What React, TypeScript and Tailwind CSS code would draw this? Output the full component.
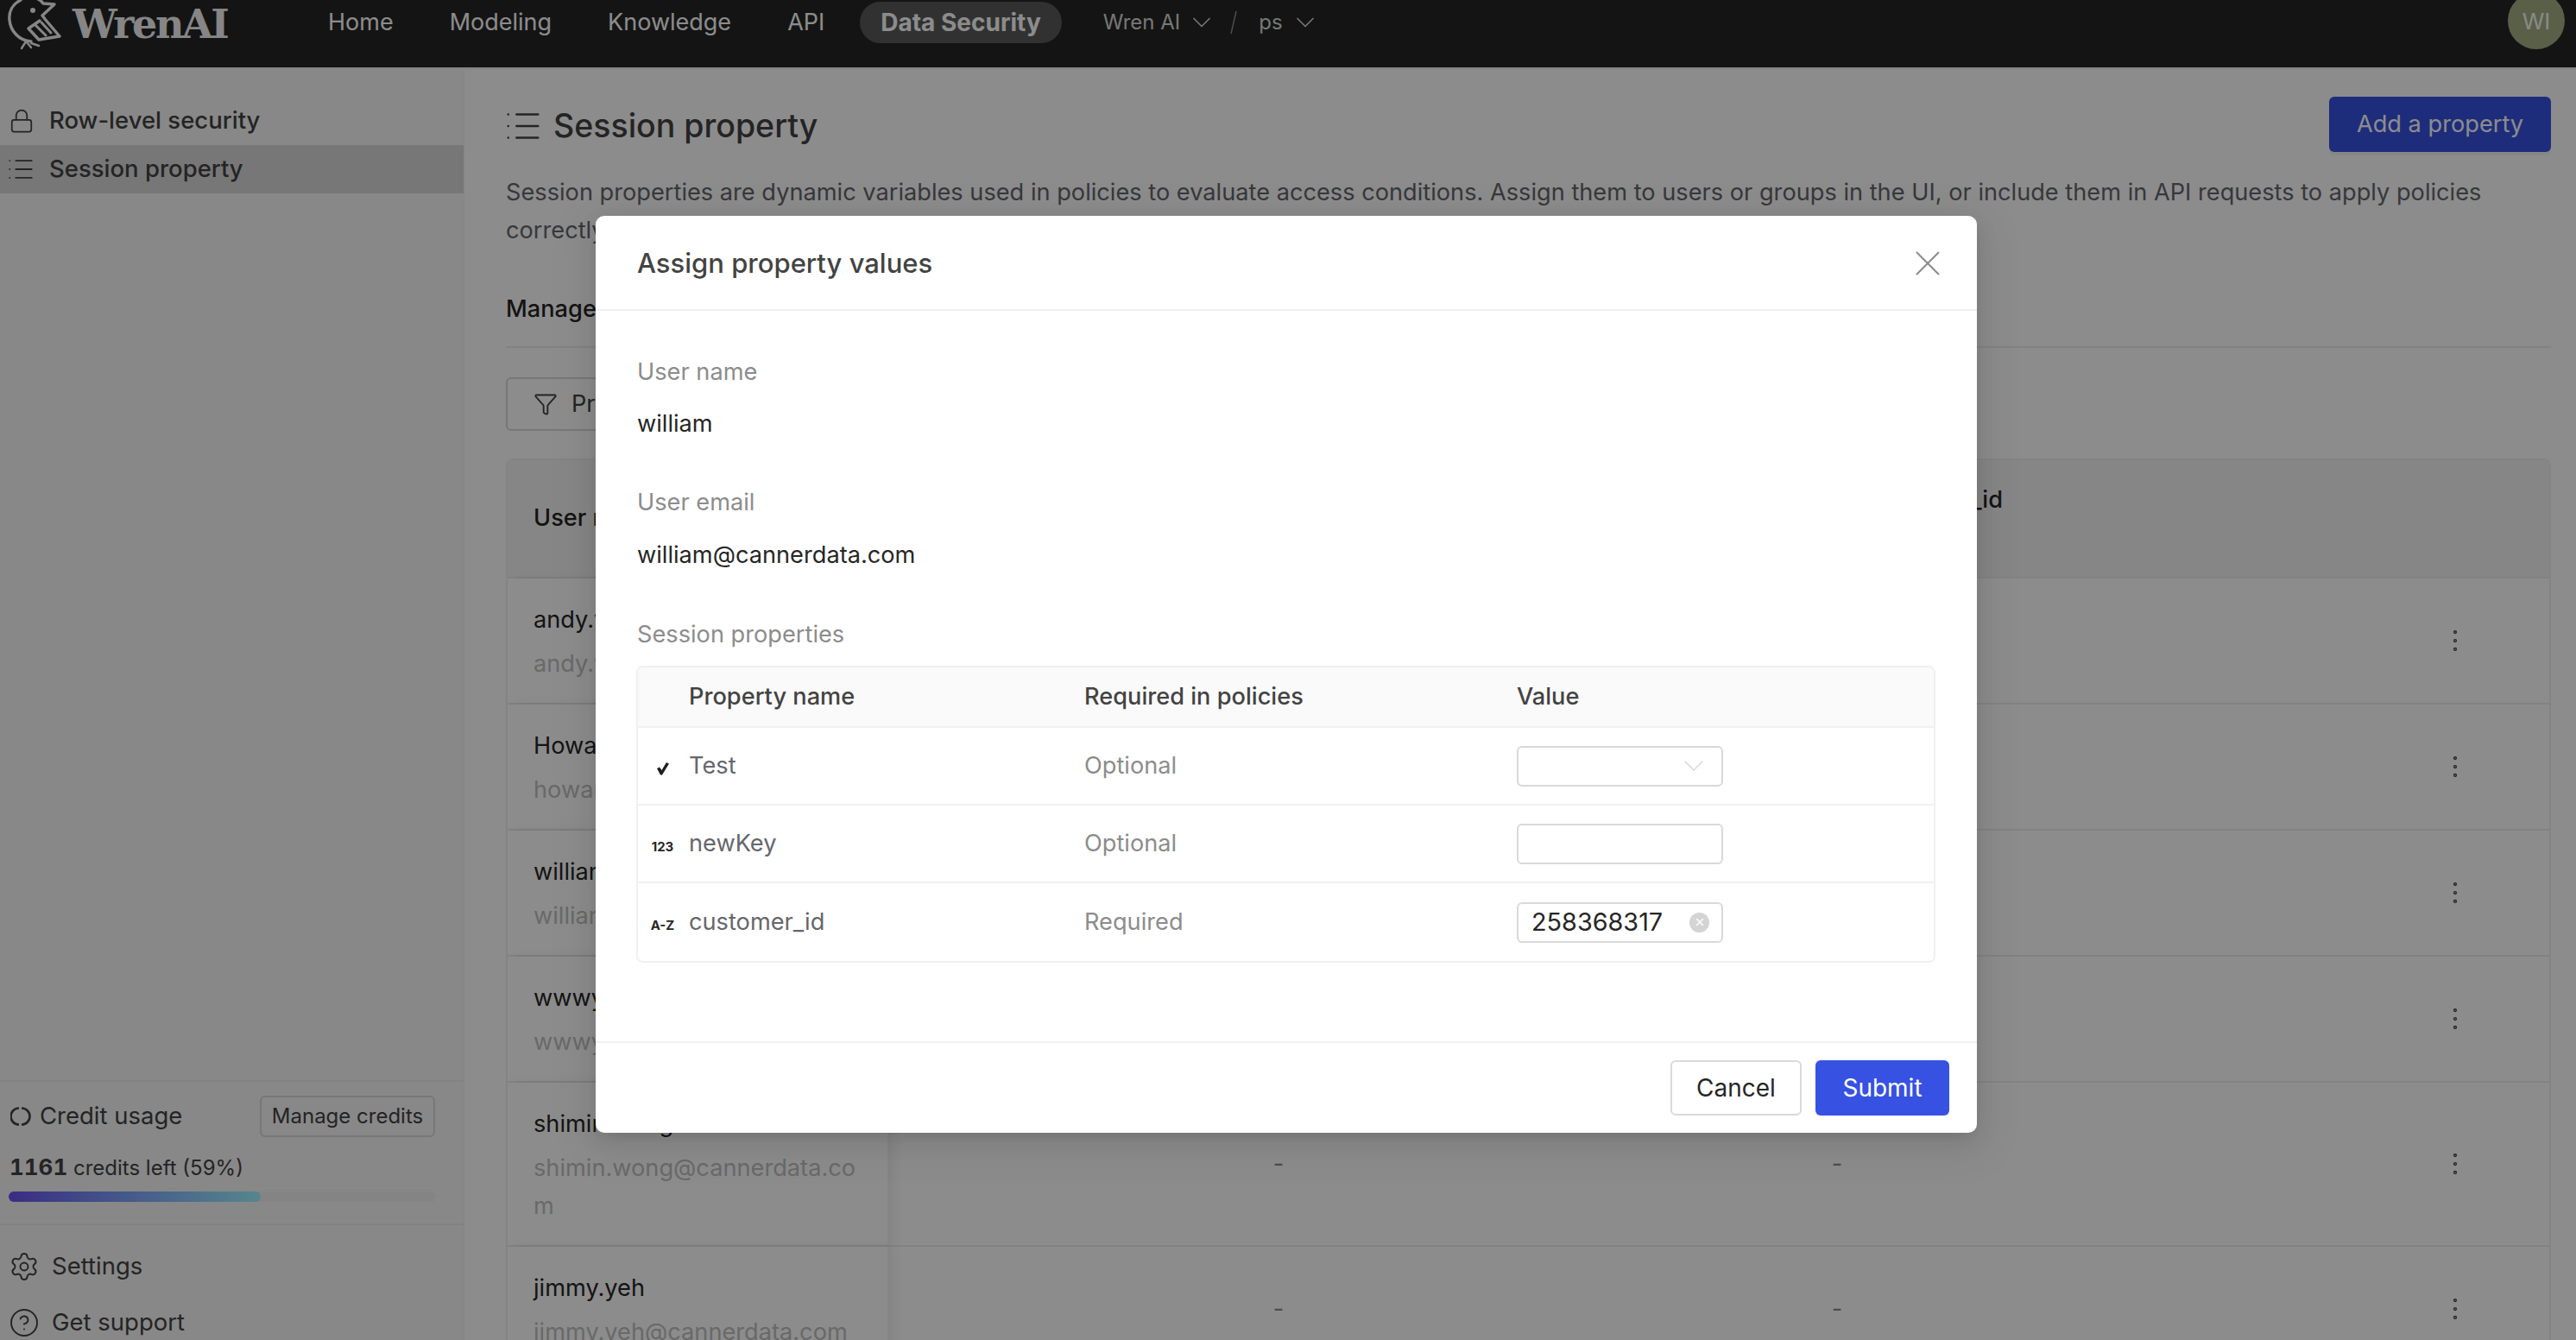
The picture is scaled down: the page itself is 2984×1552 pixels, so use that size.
import { ChevronDown, CircleHelp, Filter, List, Lock, Settings, X, EllipsisVertical } from "lucide-react";

const users = [
  { name: "andy.yang", email: "andy.yang@cannerdata.com", dash: false },
  { name: "Howard", email: "howard@cannerdata.com", dash: false },
  { name: "william", email: "william@cannerdata.com", dash: false },
  { name: "wwwy", email: "wwwy@cannerdata.com", dash: false },
  { name: "shimin.wong", email: "shimin.wong@cannerdata.com", dash: true },
  { name: "jimmy.yeh", email: "jimmy.yeh@cannerdata.com", dash: true },
];

const navItems = ["Home", "Modeling", "Knowledge", "API"];

function WrenLogo() {
  return (
    <svg viewBox="0 0 75 58" className="h-[58px] w-[75px] shrink-0 self-start" fill="none" stroke="currentColor" strokeWidth="3.4" strokeLinecap="round" strokeLinejoin="round">
      <path d="M24 0C14 5 10 14 11 23c1 13 11 24 25 25" />
      <path d="M42 -2c3 1 6 3 8 6l13 1-14 13 3 4 17 20-24 4-12-13 13-9" />
      <circle cx="38" cy="12" r="3" fill="currentColor" stroke="none" />
      <path d="M41 29l12 12M48 26l11 12" strokeWidth="3" />
      <path d="M30 48l-5 8M31 49l5 6M36 50l9 3" strokeWidth="2.4" />
    </svg>
  );
}

function Sidebar() {
  return (
    <aside className="h-[1472px] w-[538px] shrink-0 overflow-hidden border-r border-[#f0f0f0] bg-[#f7f7f7]">
      <div className="h-[1171px] pt-[32px] text-[27.5px] font-medium text-[#434343]">
        <div className="flex h-[56px] items-center gap-[17px] pl-[10px]">
          <Lock className="h-[30px] w-[30px]" strokeWidth={1.4} />
          Row-level security
        </div>
        <div className="flex h-[56px] items-center gap-[16px] bg-[#d9d9d9] pl-[7px]">
          <List className="h-[34px] w-[34px]" strokeWidth={1.3} />
          Session property
        </div>
      </div>
      <div className="border-y-2 border-[#ededed] pb-[25px] pl-[10px] pr-[33px] pt-[16px]">
        <div className="flex h-[48px] items-center justify-between">
          <div className="flex items-center gap-[10px] pl-[2px] text-[27.5px] text-[#434343]">
            <svg viewBox="0 0 24 24" className="h-[24px] w-[24px]" fill="none" stroke="currentColor" strokeWidth="2.6">
              <path d="M13 2.5a9.5 9.5 0 0 1 0 19" />
              <path d="M10 21.5a9.5 9.5 0 0 1 0-19" />
            </svg>
            Credit usage
          </div>
          <button className="h-[48px] w-[203px] rounded-[6px] border-2 border-[#d9d9d9] text-[24px] text-[#434343]">Manage credits</button>
        </div>
        <div className="mt-[19px] pl-[1px] text-[24px] leading-[32px] text-[#434343]">
          <b className="text-[26px] font-bold tabular-nums">1161</b> credits left (59%)
        </div>
        <div className="mt-[11px] h-[12px] w-[495px] rounded-full bg-[#f0f0f0]">
          <div className="h-full w-[59%] rounded-full bg-linear-to-r from-[#6a4ff0] to-[#9cf5ff]" />
        </div>
      </div>
      <div className="pt-[15px] text-[27.5px] text-[#434343]">
        <div className="flex h-[65px] items-center gap-[14px] pl-[10px]">
          <Settings className="h-[36px] w-[36px]" strokeWidth={1.3} />
          Settings
        </div>
        <div className="flex h-[65px] items-center gap-[14px] pl-[10px]">
          <CircleHelp className="h-[36px] w-[36px]" strokeWidth={1.3} />
          Get support
        </div>
      </div>
    </aside>
  );
}

function UsersTable() {
  return (
    <div className="mt-[32px] overflow-hidden rounded-t-[8px] border-2 border-b-0 border-[#f0f0f0] text-[27.2px]">
      <div className="grid h-[137px] grid-cols-[440px_906px_388px_1fr] border-b-2 border-[#ededed] bg-[#f5f5f5] font-medium text-[#262626]">
        <div className="relative z-10 flex items-center bg-[#f5f5f5] pl-[30px] shadow-[8px_0_12px_rgba(0,0,0,0.06)]">User name</div>
        <div />
        <div className="pr-[2px] pt-[28px] text-right leading-[36px]">customer_id</div>
        <div />
      </div>
      {users.map((u) => (
        <div key={u.name} className="grid grid-cols-[440px_906px_388px_1fr] border-b-2 border-[#ededed] bg-white">
          <div className="relative z-10 bg-white pb-[23px] pl-[30px] pr-[25px] pt-[26px] leading-[44px] shadow-[8px_0_12px_rgba(0,0,0,0.06)]">
            <div className="text-[#262626]">{u.name}</div>
            <div className="mt-[7px] break-all text-[#bfbfbf]">{u.email}</div>
          </div>
          <div className="flex items-center justify-center text-[#8c8c8c]">{u.dash ? "-" : ""}</div>
          <div className="flex items-center justify-center text-[#8c8c8c]">{u.dash ? "-" : ""}</div>
          <div className="flex items-center justify-end pr-[92px] text-[#434343]">
            <EllipsisVertical className="h-[34px] w-[34px]" strokeWidth={1} />
          </div>
        </div>
      ))}
    </div>
  );
}

function Page() {
  return (
    <div className="flex h-[1472px]">
      <Sidebar />
      <main className="min-w-0 flex-1 bg-white pl-[48px] pr-[29px] pt-[32px]">
        <div className="flex h-[64px] items-center justify-between">
          <div className="-ml-[3px] flex items-center gap-[12px] pt-[4px] text-[37.5px] font-medium text-[#434343]">
            <List className="h-[46px] w-[46px]" strokeWidth={1.3} />
            Session property
          </div>
          <button className="h-[64px] w-[257px] rounded-[6px] bg-[#3751e2] text-[27.2px] text-white shadow-[0_4px_0_rgba(0,0,0,0.04)]">Add a property</button>
        </div>
        <p className="mt-[25px] text-[27.2px] leading-[44px] text-[#65676c]">
          Session properties are dynamic variables used in policies to evaluate access conditions. Assign them to users or groups in the UI, or include them in API requests to apply policies correctly.
        </p>
        <div className="mt-[47px] h-[67px] border-b-2 border-[#ededed] text-[27.2px] font-medium leading-[44px] text-[#262626]">Manage property values</div>
        <div className="mt-[34px] flex h-[62px] w-[400px] items-center gap-[16px] rounded-[6px] border-2 border-[#d9d9d9] pl-[30px] text-[27.2px] text-[#434343]">
          <Filter className="h-[28px] w-[28px]" strokeWidth={1.6} />
          Property
        </div>
        <UsersTable />
      </main>
    </div>
  );
}

function TypeMark({ kind }: { kind: string }) {
  if (kind === "check") {
    return (
      <svg viewBox="0 0 16 16" className="h-[16px] w-[16px] text-[#1f1f1f]" fill="currentColor">
        <path d="M1 8l3-1.5L6.5 10 12 1l3 1.5L7 15.5H5z" />
      </svg>
    );
  }
  return <span className="text-[15px] font-bold leading-none text-[#262626]">{kind}</span>;
}

function AssignModal() {
  const rows = [
    { kind: "check", name: "Test", req: "Optional", field: "select" },
    { kind: "123", name: "newKey", req: "Optional", field: "input" },
    { kind: "A-Z", name: "customer_id", req: "Required", field: "value" },
  ];
  return (
    <div className="absolute inset-0 z-20 flex justify-center bg-black/45 pr-[4px] pt-[250px]">
      <div className="h-[1062px] w-[1600px] rounded-[10px] bg-white shadow-[0_12px_48px_16px_rgba(0,0,0,0.05),0_9px_28px_rgba(0,0,0,0.08),0_6px_16px_-8px_rgba(0,0,0,0.12)]">
        <div className="flex h-[110px] items-center justify-between border-b-2 border-[#f0f0f0] pl-[48px] pr-[32px] pt-[2px] text-[31px] font-medium text-[#434343]">
          Assign property values
          <X className="h-[50px] w-[50px] text-[#8c8c8c]" strokeWidth={1} />
        </div>
        <div className="h-[846px] px-[48px] pt-[51px] text-[27.2px] leading-[40px]">
          <div className="text-[#8c8c8c]">User name</div>
          <div className="mt-[20px] text-[#262626]">william</div>
          <div className="mt-[51px] text-[#8c8c8c]">User email</div>
          <div className="mt-[21px] text-[#262626]">william@cannerdata.com</div>
          <div className="mt-[52px] text-[#8c8c8c]">Session properties</div>
          <div className="-ml-[1px] mt-[16px] overflow-hidden rounded-[8px] border-2 border-[#f0f0f0]">
            <div className="grid h-[70px] grid-cols-[59px_458px_501px_1fr] items-center border-b-2 border-[#f0f0f0] bg-[#fafafa] font-medium text-[#434343]">
              <div />
              <div>Property name</div>
              <div>Required in policies</div>
              <div>Value</div>
            </div>
            {rows.map((r, i) => (
              <div key={r.name} className={`grid h-[90px] grid-cols-[59px_458px_501px_1fr] items-center ${i < 2 ? "border-b-2 border-[#f0f0f0]" : ""}`}>
                <div className="flex justify-center pr-[2px] pt-[6px]">
                  <TypeMark kind={r.kind} />
                </div>
                <div className="text-[#65676c]">{r.name}</div>
                <div className="text-[#8c8c8c]">{r.req}</div>
                <div className="flex h-[47px] w-[239px] items-center justify-between rounded-[6px] border-2 border-[#d9d9d9] pl-[15px] pr-[14px] text-[28.8px] text-[#262626]">
                  {r.field === "value" && <span>258368317</span>}
                  {r.field === "select" && <ChevronDown className="-mr-[2px] ml-auto h-[40px] w-[40px] text-[#d9d9d9]" strokeWidth={1} />}
                  {r.field === "value" && (
                    <span className="flex h-[23px] w-[23px] items-center justify-center rounded-full bg-[#d4d4d4]">
                      <X className="h-[14px] w-[14px] text-white" strokeWidth={2.5} />
                    </span>
                  )}
                </div>
              </div>
            ))}
          </div>
        </div>
        <div className="flex h-[106px] items-center justify-end gap-[16px] border-t-2 border-[#f0f0f0] pr-[32px] text-[28px]">
          <button className="h-[64px] w-[152px] rounded-[6px] border-2 border-[#d9d9d9] text-[#262626]">Cancel</button>
          <button className="h-[64px] w-[155px] rounded-[6px] bg-[#3751e2] text-white">Submit</button>
        </div>
      </div>
    </div>
  );
}

export default function App() {
  return (
    <div className="relative h-[1552px] w-[2984px] overflow-hidden bg-white font-['Inter',sans-serif]">
      <header className="flex h-[80px] border-b-2 border-[#f0f0f0] bg-[#262626] pr-[13px] text-white">
        <div className="flex h-[56px] w-[380px] shrink-0 items-center text-[#f5f5f5]">
          <WrenLogo />
          <span className="ml-[9px] font-['DejaVu_Serif',serif] text-[46px] font-bold leading-none tracking-[-2.4px]">WrenAI</span>
        </div>
        <nav className="mt-[2px] flex h-[48px] items-center gap-[65px] text-[27px]">
          {navItems.map((n) => (
            <span key={n}>{n}</span>
          ))}
        </nav>
        <span className="ml-[41px] mt-[2px] flex h-[48px] items-center rounded-full bg-[#595959] px-[24px] text-[28px] font-bold">Data Security</span>
        <div className="ml-[48px] mt-[2px] flex h-[48px] items-center text-[24px] text-[#d9d9d9]">
          Wren AI
          <ChevronDown className="ml-[7px] h-[36px] w-[36px]" strokeWidth={1.1} />
          <svg viewBox="0 0 10 28" className="ml-[14px] h-[28px] w-[10px] text-[#8c8c8c]" fill="none" stroke="currentColor" strokeWidth="1.5">
            <path d="M8 1L2 27" />
          </svg>
          <span className="ml-[24px]">ps</span>
          <ChevronDown className="ml-[8px] h-[36px] w-[36px]" strokeWidth={1.1} />
        </div>
        <div className="-mt-[9px] ml-auto flex h-[66px] w-[66px] items-center justify-center rounded-full bg-[#a5ae83] text-[26px] text-[#fafafa]">WI</div>
      </header>
      <Page />
      <AssignModal />
    </div>
  );
}
